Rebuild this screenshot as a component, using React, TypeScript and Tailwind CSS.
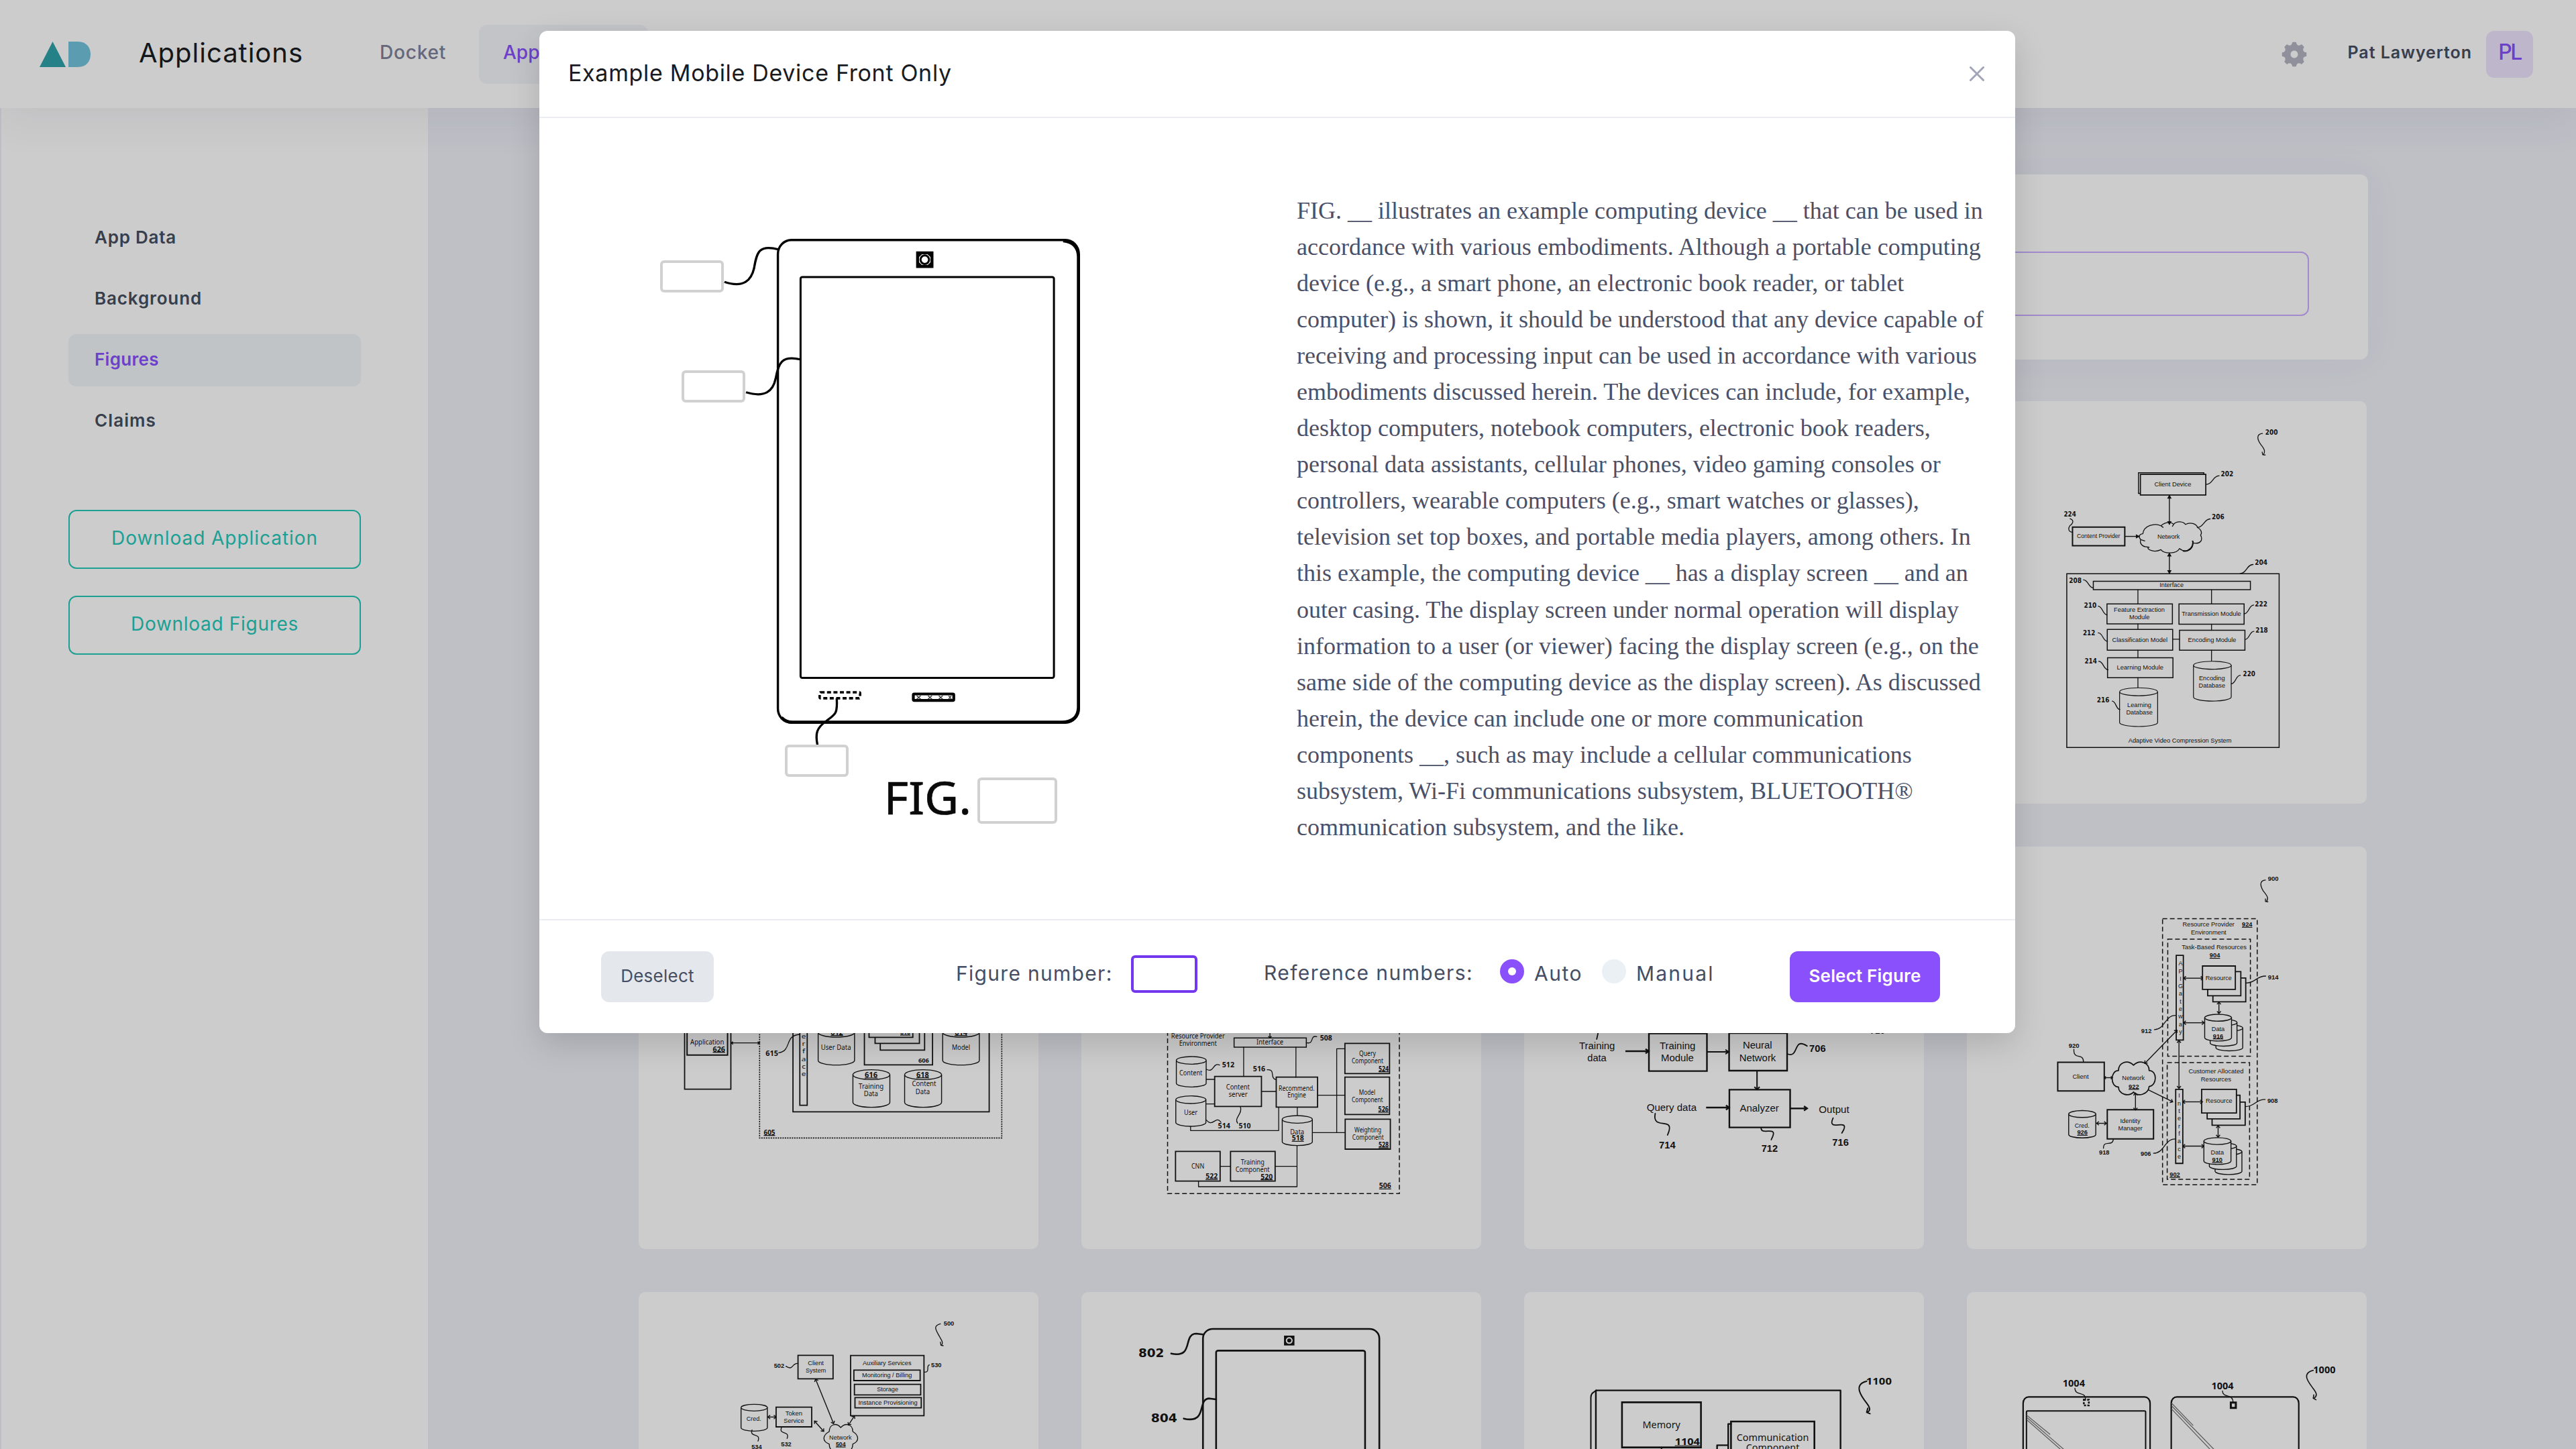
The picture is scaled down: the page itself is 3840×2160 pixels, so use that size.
import React from "react";
import { RiSettings5Fill } from "react-icons/ri";

/* ---------- drawing primitives shared by the figures ---------- */

const INK = "#161616";
type Font = "sans" | "verdana" | "dejavu";
const FONTS: Record<Font, string> = {
  sans: '"Liberation Sans", sans-serif',
  verdana: '"Noto Sans", sans-serif',
  dejavu: '"DejaVu Sans", sans-serif',
};

function T({ x, y, w, t, size = 25, b = false, u = false, f = "sans" }: { x: number; y: number; w: number; t: string; size?: number; b?: boolean; u?: boolean; f?: Font }) {
  return (
    <g>
      <text x={x} y={y} textLength={w} lengthAdjust="spacingAndGlyphs" fontSize={size} fontWeight={b ? 700 : 400} fontFamily={FONTS[f]} fill={INK}>
        {t}
      </text>
      {u && <path d={`M${x} ${y + 3}H${x + w}`} stroke={INK} strokeWidth={1.2} vectorEffect="non-scaling-stroke" />}
    </g>
  );
}

/** Rectangle given by its two corners. */
function R({ a, s = 1.5, dash, fill = "none", rx, ry }: { a: [number, number, number, number]; s?: number; dash?: string; fill?: string; rx?: number; ry?: number }) {
  return <rect x={a[0]} y={a[1]} width={a[2] - a[0]} height={a[3] - a[1]} rx={rx} ry={ry} fill={fill} stroke={INK} strokeWidth={s} strokeDasharray={dash} vectorEffect="non-scaling-stroke" />;
}

function P({ d, s = 1.3, c = INK }: { d: string; s?: number; c?: string }) {
  return <path d={d} fill="none" stroke={c} strokeWidth={s} strokeLinecap="round" strokeLinejoin="round" vectorEffect="non-scaling-stroke" />;
}

/** S-shaped leader line between a reference number and its part. */
function Lead({ a }: { a: [number, number, number, number] }) {
  const m = (a[0] + a[2]) / 2;
  return <P d={`M${a[0]} ${a[1]}C${m} ${a[1]} ${m} ${a[3]} ${a[2]} ${a[3]}`} />;
}

function Cyl({ a, ry = 14, s = 1.4 }: { a: [number, number, number, number]; ry?: number; s?: number }) {
  const [x1, y1, x2, y2] = a;
  const rx = (x2 - x1) / 2;
  return (
    <g fill="#ffffff" stroke={INK} strokeWidth={s}>
      <path vectorEffect="non-scaling-stroke" d={`M${x1} ${y1 + ry}V${y2 - ry}A${rx} ${ry} 0 0 0 ${x2} ${y2 - ry}V${y1 + ry}`} />
      <ellipse vectorEffect="non-scaling-stroke" cx={x1 + rx} cy={y1 + ry} rx={rx} ry={ry} />
    </g>
  );
}

/** Straight arrow; kx and ky are the horizontal and vertical scale of the figure. */
function Arrow({ a, two = false, h = 11, s = 1.4, solid = false, kx = 1, ky = 1 }: { a: [number, number, number, number]; two?: boolean; h?: number; s?: number; solid?: boolean; kx?: number; ky?: number }) {
  const [x1, y1, x2, y2] = a;
  const ang = Math.atan2((y2 - y1) * ky, (x2 - x1) * kx);
  const head = (x: number, y: number, t: number) => {
    const p = (o: number) => `${x - (h * Math.cos(t + o)) / kx} ${y - (h * Math.sin(t + o)) / ky}`;
    const o = solid ? 0.5 : 0.7;
    return `M${p(o)}L${x} ${y}L${p(-o)}${solid ? "Z" : ""}`;
  };
  return (
    <g fill={solid ? INK : "none"} stroke={INK} strokeWidth={s}>
      <path vectorEffect="non-scaling-stroke" d={`M${x1} ${y1}L${x2} ${y2}`} />
      <path vectorEffect="non-scaling-stroke" d={head(x2, y2, ang)} />
      {two && <path vectorEffect="non-scaling-stroke" d={head(x1, y1, ang + Math.PI)} />}
    </g>
  );
}

function Vertical({ x, ys, t, size = 22, f = "sans" }: { x: number; ys: number[]; t: string; size?: number; f?: Font }) {
  return (
    <g>
      {ys.map((y, i) => (
        <text key={y} x={x} y={y} textAnchor="middle" fontSize={size} fontFamily={FONTS[f]} fill={INK}>
          {t[i]}
        </text>
      ))}
    </g>
  );
}

function Figure({ box, children }: { box: string; children: React.ReactNode }) {
  return (
    <svg viewBox={box} preserveAspectRatio="none" className="block h-full w-full">
      {children}
    </svg>
  );
}

/* ---------- figures ---------- */

function VideoCompression() {
  return (
    <Figure box="29 20 1461 1518">
      <T f="dejavu" b x={1119} y={147} w={46} t="200" />
      <P d="M1109 142C1085 145 1090 165 1104 185C1118 203 1120 212 1112 222M1108 212L1110 222L1119 223" />
      <R a={[656, 290, 895, 368]} s={1.4} />
      <R a={[663, 296, 902, 374]} s={1.7} fill="#ffffff" />
      <T x={714} y={342} w={135} t="Client Device" />
      <Lead a={[904, 334, 951, 301]} />
      <T f="dejavu" b x={957} y={304} w={46} t="202" />
      <Arrow solid two a={[769, 376, 769, 484]} />
      <T f="dejavu" b x={383} y={455} w={45} t="224" />
      <P d="M406 463C425 470 413 485 405 490C398 500 400 513 414 514" />
      <R a={[415, 495, 606, 565]} s={2} />
      <T x={431} y={537} w={158} t="Content Provider" />
      <Arrow solid a={[607, 530, 658, 530]} />
      <P d="M672 520C675 490 715 478 738 490C755 474 775 475 785 484C797 470 820 474 828 485C845 475 868 482 872 497C888 505 888 520 883 525C893 545 882 560 855 555C856 580 830 596 806 576C795 597 750 597 738 580C715 592 690 582 690 570C668 570 660 555 664 542C655 532 658 522 672 520M738 490L746 496M785 484L780 492M855 555L853 547M690 570L695 571M664 542L679 547" />
      <P s={2} d="M855 549C856 572 840 588 820 585" />
      <T x={725} y={538} w={82} t="Network" />
      <Lead a={[872, 496, 918, 464]} />
      <T f="dejavu" b x={924} y={466} w={46} t="206" />
      <Arrow solid two a={[769, 594, 769, 669]} />
      <Lead a={[1028, 670, 1075, 636]} />
      <T f="dejavu" b x={1081} y={638} w={46} t="204" />
      <R a={[394, 671, 1170, 1326]} />
      <T f="dejavu" b x={402} y={705} w={46} t="208" />
      <Lead a={[455, 694, 491, 724]} />
      <R a={[491, 699, 1065, 731]} />
      <T x={733} y={722} w={88} t="Interface" />
      <P d="M654 731V784M923 731V784M654 860V881M923 861V884M781 918H806M654 959V988M923 959V1001M654 1063V1101" />
      <R a={[541, 785, 780, 860]} />
      <T x={566} y={815} w={186} t="Feature Extraction" />
      <T x={622} y={843} w={75} t="Module" />
      <T f="dejavu" b x={457} y={799} w={46} t="210" />
      <Lead a={[509, 793, 541, 826]} />
      <R a={[804, 785, 1042, 861]} />
      <T x={814} y={830} w={217} t="Transmission Module" />
      <Lead a={[1042, 822, 1077, 789]} />
      <T f="dejavu" b x={1081} y={794} w={46} t="222" />
      <R a={[542, 881, 781, 959]} />
      <T x={560} y={928} w={202} t="Classification Model" />
      <T f="dejavu" b x={453} y={902} w={45} t="212" />
      <Lead a={[509, 894, 543, 926]} />
      <R a={[806, 884, 1045, 959]} />
      <T x={837} y={929} w={176} t="Encoding Module" />
      <Lead a={[1045, 919, 1078, 888]} />
      <T f="dejavu" b x={1084} y={893} w={45} t="218" />
      <R a={[543, 988, 782, 1063]} />
      <T x={577} y={1033} w={170} t="Learning Module" />
      <T f="dejavu" b x={459} y={1009} w={45} t="214" />
      <Lead a={[511, 1001, 545, 1033]} />
      <Cyl a={[857, 1001, 995, 1151]} ry={15} s={1.2} />
      <T x={877} y={1073} w={95} t="Encoding" />
      <T x={876} y={1101} w={97} t="Database" />
      <Lead a={[995, 1086, 1028, 1054]} />
      <T f="dejavu" b x={1038} y={1057} w={45} t="220" />
      <Cyl a={[587, 1101, 726, 1247]} ry={15} s={1.2} />
      <T x={615} y={1173} w={88} t="Learning" />
      <T x={611} y={1201} w={97} t="Database" />
      <Lead a={[560, 1151, 588, 1183]} />
      <T f="dejavu" b x={504} y={1156} w={46} t="216" />
      <T x={619} y={1307} w={377} t="Adaptive Video Compression System" />
    </Figure>
  );
}

function Stack({ boxes }: { boxes: [number, number, number, number][] }) {
  return (
    <g>
      {boxes.map((a) => (
        <R key={a[0]} a={a} s={1.8} fill="#ffffff" />
      ))}
    </g>
  );
}

function ResourceEnvironment() {
  return (
    <Figure box="29 5 1461 1517">
      <T b x={1129} y={135} w={39} t="900" />
      <P d="M1120 131C1098 133 1100 152 1112 172C1128 192 1132 200 1124 211M1120 202L1120 212L1129 213" />
      <R a={[744, 277, 1090, 1279]} dash="7 4" />
      <T x={817} y={307} w={190} t="Resource Provider" />
      <T b u x={1034} y={306} w={38} t="924" />
      <T x={848} y={336} w={129} t="Environment" />
      <R a={[763, 354, 1065, 795]} dash="7 4" />
      <T x={814} y={393} w={237} t="Task-Based Resources" />
      <T b u x={916} y={423} w={38} t="904" />
      <R a={[794, 415, 820, 734]} s={1.8} />
      <Vertical x={810} t="APIGateway" ys={[453, 482, 510, 538, 567, 596, 624, 653, 682, 710]} />
      <Arrow two a={[821, 501, 892, 501]} />
      <Stack boxes={[[928, 500, 1048, 590], [909, 476, 1030, 567], [890, 455, 1010, 543]]} />
      <T x={901} y={507} w={96} t="Resource" />
      <Lead a={[1049, 519, 1121, 493]} />
      <T b x={1129} y={506} w={39} t="914" />
      <Arrow two a={[950, 591, 950, 634]} />
      <Cyl a={[939, 677, 1037, 775]} ry={12} />
      <Cyl a={[918, 656, 1016, 757]} ry={12} />
      <Cyl a={[898, 637, 996, 738]} ry={13} />
      <T x={923} y={701} w={48} t="Data" />
      <T b u x={928} y={727} w={38} t="916" />
      <Arrow two a={[821, 669, 896, 669]} />
      <T b x={666} y={707} w={38} t="912" />
      <Lead a={[714, 695, 791, 641]} />
      <Arrow two a={[797, 697, 679, 822]} />
      <R a={[761, 819, 1062, 1259]} dash="7 4" />
      <Arrow two a={[804, 736, 804, 916]} />
      <T x={839} y={860} w={201} t="Customer Allocated" />
      <T x={884} y={889} w={111} t="Resources" />
      <R a={[792, 920, 818, 1199]} s={1.8} />
      <Vertical x={805} t="Interface" ys={[951, 980, 1009, 1037, 1066, 1094, 1122, 1152, 1180]} />
      <Stack boxes={[[925, 968, 1046, 1055], [907, 942, 1027, 1031], [887, 920, 1014, 1009]]} />
      <T x={902} y={972} w={97} t="Resource" />
      <Arrow two a={[818, 967, 890, 967]} />
      <Lead a={[1046, 985, 1119, 958]} />
      <T b x={1127} y={971} w={38} t="908" />
      <Arrow two a={[947, 1057, 947, 1100]} />
      <Cyl a={[936, 1143, 1034, 1241]} ry={12} />
      <Cyl a={[915, 1122, 1014, 1222]} ry={12} />
      <Cyl a={[895, 1102, 994, 1203]} ry={13} />
      <T x={920} y={1166} w={48} t="Data" />
      <T b u x={925} y={1193} w={38} t="910" />
      <Arrow two a={[818, 1134, 895, 1134]} />
      <T b x={664} y={1171} w={38} t="906" />
      <Lead a={[711, 1161, 790, 1107]} />
      <T b u x={770} y={1249} w={38} t="902" />
      <T b x={401} y={763} w={39} t="920" />
      <P d="M420 769C418 812 455 780 455 816" />
      <R a={[361, 818, 531, 926]} s={2} />
      <T x={415} y={880} w={59} t="Client" />
      <Arrow two a={[531, 876, 561, 876]} h={8} />
      <P s={1.7} d="M583 849C583 820 615 805 638 829C661 805 695 820 695 849C725 849 725 905 695 909C693 938 655 950 638 930C620 950 583 938 583 911C552 911 552 849 583 849" />
      <T x={596} y={886} w={83} t="Network" />
      <T b u x={620} y={917} w={38} t="922" />
      <Arrow a={[692, 922, 781, 967]} />
      <Arrow two a={[645, 934, 645, 998]} />
      <R a={[542, 997, 711, 1107]} s={2} />
      <T x={589} y={1046} w={74} t="Identity" />
      <T x={582} y={1074} w={89} t="Manager" />
      <P d="M564 1108C562 1138 528 1108 528 1142" />
      <T b x={512} y={1166} w={38} t="918" />
      <Cyl a={[401, 1000, 500, 1103]} ry={13} />
      <T x={423} y={1064} w={54} t="Cred." />
      <T b u x={432} y={1090} w={38} t="926" />
      <Arrow two a={[503, 1048, 539, 1048]} />
    </Figure>
  );
}

function TrainingData() {
  return (
    <Figure box="29 -774 1461 1800">
      <R a={[197, -420, 366, 311]} s={1.8} />
      <R a={[206, -60, 354, 158]} s={2} />
      <T f="verdana" size={31} x={218} y={112} w={123} t="Application" />
      <T f="verdana" size={31} b u x={300} y={143} w={45} t="626" />
      <Arrow two h={9} a={[367, 104, 471, 104]} />
      <R a={[471, -500, 1356, 529]} dash="2 1.5" s={1.6} />
      <T f="verdana" size={30} b u x={486} y={515} w={42} t="605" />
      <R a={[593, -440, 1310, 412]} s={1.8} />
      <R a={[618, -400, 645, 383]} s={1.8} />
      <Vertical f="verdana" size={29} x={632} t="erface" ys={[84, 117, 151, 185, 219, 253]} />
      <T f="verdana" size={31} b x={493} y={163} w={46} t="615" />
      <P d="M541 148C590 140 560 70 618 66" />
      <Cyl a={[685, 36, 818, 203]} ry={21} />
      <T f="verdana" size={30} b u x={731} y={68} w={45} t="612" />
      <T f="verdana" size={31} x={695} y={136} w={110} t="User Data" />
      <R a={[854, -160, 1103, 202]} s={1.8} />
      <R a={[912, -20, 1074, 136]} s={1.8} fill="#ffffff" />
      <R a={[893, -50, 1055, 106]} s={1.8} fill="#ffffff" />
      <R a={[871, -80, 1031, 79]} s={1.8} fill="#ffffff" />
      <T f="verdana" size={25} b u x={985} y={66} w={37} t="610" />
      <T f="verdana" size={27} b x={1051} y={191} w={39} t="606" />
      <Cyl a={[1140, 36, 1274, 203]} ry={21} />
      <T f="verdana" size={30} b u x={1184} y={68} w={46} t="614" />
      <T f="verdana" size={31} x={1174} y={136} w={66} t="Model" />
      <Cyl a={[812, 224, 947, 392]} ry={22} />
      <T f="verdana" size={30} b u x={855} y={258} w={47} t="616" />
      <T f="verdana" size={31} x={833} y={310} w={91} t="Training" />
      <T f="verdana" size={31} x={852} y={343} w={52} t="Data" />
      <Cyl a={[1001, 224, 1136, 392]} ry={22} />
      <T f="verdana" size={30} b u x={1044} y={257} w={46} t="618" />
      <T f="verdana" size={31} x={1028} y={298} w={88} t="Content" />
      <T f="verdana" size={31} x={1041} y={333} w={52} t="Data" />
    </Figure>
  );
}

function Recommendation() {
  const v = { f: "verdana" as Font, size: 30 };
  return (
    <Figure box="29 -774 1461 1800">
      <R a={[344, -40, 1191, 778]} dash="7 4" />
      <T {...v} x={357} y={83} w={196} t="Resource Provider" />
      <T {...v} x={386} y={116} w={138} t="Environment" />
      <Arrow h={9} a={[718, -30, 718, 81]} />
      <R a={[587, 82, 851, 123]} />
      <T {...v} x={669} y={110} w={98} t="Interface" />
      <P d="M851 103C882 112 862 68 889 76" />
      <T {...v} b x={901} y={93} w={44} t="508" />
      <P d="M622 123V254M813 123V258M485 267H516M687 321H741M484 377H516M428 476V496H750V391M818 391V430M873 505H992M892 338H992M962 505V130H992M536 656H574M737 656H817M817 563V747H457V722" />
      <Cyl a={[376, 165, 485, 301]} ry={17} />
      <T {...v} x={387} y={250} w={84} t="Content" />
      <P d="M486 222C515 240 508 190 534 203" />
      <T {...v} b x={543} y={214} w={45} t="512" />
      <R a={[516, 254, 687, 388]} s={1.8} />
      <T {...v} x={558} y={311} w={86} t="Content" />
      <T {...v} x={567} y={344} w={69} t="server" />
      <T {...v} b x={656} y={231} w={45} t="516" />
      <P d="M708 224C740 220 716 262 740 268" />
      <R a={[741, 257, 892, 391]} s={1.8} />
      <T {...v} x={750} y={318} w={131} t="Recommend." />
      <T {...v} x={782} y={348} w={68} t="Engine" />
      <Cyl a={[374, 341, 484, 477]} ry={17} />
      <T {...v} x={404} y={425} w={49} t="User" />
      <P d="M486 449C510 485 520 425 539 459" />
      <T {...v} b x={528} y={486} w={45} t="514" />
      <P d="M610 390C620 420 585 440 600 463" />
      <T {...v} b x={604} y={486} w={44} t="510" />
      <Cyl a={[763, 429, 873, 563]} ry={17} />
      <T {...v} x={792} y={512} w={51} t="Data" />
      <T {...v} b u x={798} y={541} w={44} t="518" />
      <R a={[992, 106, 1155, 241]} s={1.8} />
      <T {...v} x={1044} y={161} w={61} t="Query" />
      <T {...v} x={1017} y={194} w={115} t="Component" />
      <T {...v} b u x={1115} y={230} w={37} t="524" />
      <R a={[992, 257, 1155, 424]} s={1.8} />
      <T {...v} x={1043} y={335} w={60} t="Model" />
      <T {...v} x={1017} y={368} w={114} t="Component" />
      <T {...v} b u x={1114} y={411} w={37} t="526" />
      <R a={[993, 445, 1158, 579]} s={1.8} />
      <T {...v} x={1027} y={504} w={98} t="Weighting" />
      <T {...v} x={1019} y={537} w={115} t="Component" />
      <T {...v} b u x={1115} y={570} w={37} t="528" />
      <R a={[373, 589, 536, 722]} s={1.8} />
      <T {...v} x={431} y={665} w={47} t="CNN" />
      <T {...v} b u x={483} y={712} w={44} t="522" />
      <R a={[574, 589, 737, 722]} s={1.8} />
      <T {...v} x={612} y={649} w={86} t="Training" />
      <T {...v} x={592} y={681} w={125} t="Component" />
      <T {...v} b u x={684} y={713} w={44} t="520" />
      <T {...v} b u x={1117} y={754} w={44} t="506" />
    </Figure>
  );
}

function NeuralNetwork() {
  const v = { size: 44 };
  return (
    <Figure box="29 -774 1461 1800">
      <P s={1.8} d="M300 40C300 65 297 75 294 87" />
      <T {...v} x={230} y={132} w={131} t="Training" />
      <T {...v} x={260} y={186} w={70} t="data" />
      <Arrow h={15} s={2.4} a={[399, 141, 484, 141]} />
      <R a={[485, 62, 697, 230]} s={2.4} />
      <T {...v} x={524} y={132} w={131} t="Training" />
      <T {...v} x={529} y={186} w={120} t="Module" />
      <Arrow h={15} s={2} a={[697, 144, 776, 144]} />
      <R a={[778, 60, 990, 228]} s={2.4} />
      <T {...v} x={828} y={130} w={107} t="Neural" />
      <T {...v} x={815} y={185} w={134} t="Network" />
      <P s={1.8} d="M990 153C1035 175 1010 75 1063 118" />
      <T {...v} b x={1071} y={144} w={60} t="706" />
      <T {...v} b x={1293} y={64} w={55} t="710" />
      <Arrow h={15} s={2} a={[880, 230, 880, 312]} />
      <R a={[779, 313, 1001, 482]} s={2.4} />
      <T {...v} x={817} y={411} w={143} t="Analyzer" />
      <T {...v} x={477} y={408} w={182} t="Query data" />
      <Arrow h={15} s={2.4} a={[694, 393, 778, 393]} />
      <P s={1.8} d="M508 420C495 495 575 435 558 500L553 516" />
      <T {...v} b x={522} y={577} w={60} t="714" />
      <Arrow h={15} s={2.4} a={[1002, 397, 1063, 397]} />
      <P s={1.8} d="M895 483C893 520 952 475 938 520L932 537" />
      <T {...v} b x={896} y={592} w={60} t="712" />
      <T {...v} x={1106} y={416} w={111} t="Output" />
      <P s={1.8} d="M1158 440C1133 505 1215 440 1197 492L1190 507" />
      <T {...v} b x={1155} y={564} w={60} t="716" />
    </Figure>
  );
}

function AuxiliaryServices() {
  const k = { kx: 0.816, ky: 0.333, h: 4.5 };
  return (
    <Figure box="15 48 730 1800">
      <T b size={29} x={572} y={197} w={19} t="500" />
      <P d="M566 190C550 200 560 225 565 250C570 270 571 278 568 286M566 272L567 286L571 288" />
      <R a={[306, 331, 370, 436]} s={1.8} />
      <T size={29} x={324} y={375} w={29} t="Client" />
      <T size={29} x={320} y={409} w={37} t="System" />
      <T b size={29} x={262} y={387} w={19} t="502" />
      <P d="M284 380C298 402 294 365 306 367" />
      <R a={[402, 332, 536, 601]} s={1.8} />
      <T size={29} x={424} y={376} w={89} t="Auxiliary Services" />
      <R a={[408, 397, 529, 444]} s={1.8} />
      <T size={29} x={423} y={429} w={91} t="Monitoring / Billing" />
      <R a={[409, 461, 530, 508]} s={1.8} />
      <T size={29} x={450} y={493} w={39} t="Storage" />
      <R a={[410, 520, 531, 566]} s={1.8} />
      <T size={29} x={416} y={552} w={108} t="Instance Provisioning" />
      <T b size={29} x={549} y={384} w={19} t="530" />
      <P d="M537 406C548 408 539 376 546 374" />
      <Arrow two {...k} a={[338, 437, 371, 637]} />
      <Arrow two {...k} a={[409, 602, 398, 643]} />
      <Cyl a={[202, 550, 250, 670]} ry={15} />
      <T size={29} x={212} y={624} w={27} t="Cred." />
      <Arrow two {...k} a={[251, 607, 266, 607]} />
      <R a={[266, 563, 331, 651]} s={1.8} />
      <T size={29} x={283} y={600} w={31} t="Token" />
      <T size={29} x={280} y={633} w={37} t="Service" />
      <P d="M276 653C270 690 292 665 286 703" />
      <T b size={29} x={275} y={738} w={19} t="532" />
      <P d="M222 665C217 700 239 675 233 715" />
      <T b size={28} x={221} y={749} w={19} t="534" />
      <Arrow two {...k} a={[336, 625, 353, 671]} />
      <P d="M363 672C363 640 376 630 384 654C393 630 406 640 406 672C418 690 418 715 406 728C406 760 393 775 384 752C376 775 363 760 363 728C350 715 350 690 363 672" />
      <T size={29} x={363} y={708} w={41} t="Network" />
      <T b u size={29} x={375} y={738} w={18} t="504" />
    </Figure>
  );
}

function DeviceThumb() {
  return (
    <Figure box="823 48 730 1800">
      <R a={[1045, 213, 1367, 1600]} rx={18} ry={42} s={2.6} />
      <R a={[1069, 310, 1341, 1450]} rx={4} ry={8} s={2.6} />
      <rect x={1193} y={243} width={19} height={44} fill={INK} />
      <ellipse cx={1202.5} cy={265} rx={5} ry={12} fill="none" stroke="#ffffff" strokeWidth={2} vectorEffect="non-scaling-stroke" />
      <T f="dejavu" b size={54} x={927} y={339} w={47} t="802" />
      <P s={2.6} d="M987 323C1030 347 1007 234 1033 234L1045 238" />
      <T f="dejavu" b size={54} x={950} y={629} w={48} t="804" />
      <P s={2.6} d="M1010 614C1055 640 1033 524 1057 524L1069 528" />
    </Figure>
  );
}

function Components() {
  return (
    <Figure box="14 48 719 1800">
      <P s={2.4} d="M583 760V488H143V760" />
      <P s={2} d="M144 488C138 498 134 500 134 520V760" />
      <R a={[190, 541, 332, 743]} s={2.6} />
      <T f="verdana" size={44} x={227} y={657} w={68} t="Memory" />
      <T f="verdana" b u size={41} x={285} y={732} w={45} t="1104" />
      <P s={2} d="M261 743V760" />
      <R a={[386, 627, 536, 900]} s={2.6} />
      <P s={2.4} d="M386 638H381V760M381 733H361V760" />
      <T f="verdana" size={44} x={396} y={714} w={130} t="Communication" />
      <T f="verdana" size={44} x={413} y={760} w={96} t="Component" />
      <T f="verdana" b size={43} x={629} y={463} w={46} t="1100" />
      <P s={2} d="M630 447C604 462 622 520 630 545C637 568 637 578 631 586M632 568L630 586L636 592" />
    </Figure>
  );
}

function TwoDevices() {
  return (
    <Figure box="811 48 718 1800">
      <R a={[912, 517, 1140, 1400]} rx={10} ry={28} s={2.2} />
      <R a={[918, 580, 1132, 1300]} rx={2} ry={5} s={2} />
      <R a={[1021, 530, 1030, 555]} dash="3 2" s={2.6} />
      <T f="verdana" b size={41} x={983} y={471} w={40} t="1004" />
      <P d="M1005 478C1005 515 1024 488 1024 529" />
      <P c="#777777" d="M919 600L960 684M919 610L989 760M919 620L983 760" />
      <R a={[1178, 517, 1407, 1400]} rx={10} ry={28} s={2.2} />
      <R a={[1285, 542, 1294, 566]} s={3} />
      <T f="verdana" b size={41} x={1250} y={483} w={40} t="1004" />
      <P d="M1270 490C1270 525 1289 500 1289 541" />
      <P c="#777777" d="M1179 546L1217 644M1179 558L1258 760M1179 572L1251 760" />
      <T f="verdana" b size={41} x={1433} y={411} w={40} t="1000" />
      <P s={1.6} d="M1433 398C1410 412 1426 455 1433 480C1440 502 1440 512 1435 522M1434 508L1433 523L1438 530" />
    </Figure>
  );
}

function MobileDevice() {
  return (
    <Figure box="6 -163 1562 1872">
      <rect x={537} y={122} width={670} height={1128} rx={30} ry={33} fill="none" stroke="#000000" strokeWidth={3.4} vectorEffect="non-scaling-stroke" />
      <path d="M1172 124C1195 126 1205 140 1206 160V1215C1205 1240 1190 1249 1168 1249H570C560 1249 552 1246 545 1238" fill="none" stroke="#000000" strokeWidth={4.6} vectorEffect="non-scaling-stroke" />
      <rect x={587.5} y={208.5} width={564} height={937} rx={4} ry={4} fill="none" stroke="#000000" strokeWidth={3} vectorEffect="non-scaling-stroke" />
      <rect x={848} y={152} width={32} height={32} fill="#ffffff" stroke="#000000" strokeWidth={4.4} vectorEffect="non-scaling-stroke" />
      <path d="M848 152h13l-13 13zM880 152h-13l13 13zM848 184h13l-13-13zM880 184h-13l13-13z" fill="#000000" />
      <ellipse cx={864} cy={168} rx={9.5} ry={10} fill="#ffffff" stroke="#000000" strokeWidth={3} vectorEffect="non-scaling-stroke" />
      <rect x={630} y={1179} width={90} height={14} rx={2} fill="none" stroke="#000000" strokeWidth={3.6} strokeDasharray="6 3.6" vectorEffect="non-scaling-stroke" />
      <rect x={838.5} y={1183} width={90} height={15} rx={2} fill="none" stroke="#000000" strokeWidth={4.2} vectorEffect="non-scaling-stroke" />
      <path d="M846 1187l9 8M855 1187l-9 8M871 1187l9 8M880 1187l-9 8M895 1187l9 8M904 1187l-9 8M917 1187l6 8M923 1187l-6 8" fill="none" stroke="#333333" strokeWidth={2} />
      <g fill="none" stroke="#000000" strokeWidth={5}>
        <path d="M418 220C462 235 478 215 484 188C490 150 495 132 538 144" />
        <path d="M466 478C508 491 526 476 532 446C538 410 545 391 587 401" />
        <path d="M668 1193C670 1230 665 1230 645 1246C623 1262 620 1275 625 1302" />
      </g>
      <text x={773} y={1464} fontSize={105} textLength={195} lengthAdjust="spacingAndGlyphs" fontFamily={'"Noto Sans", sans-serif'} fill="#0a0a0a" stroke="#0a0a0a" strokeWidth={1}>
        FIG.
      </text>
    </Figure>
  );
}

/* ---------- page ---------- */

const cards: { id: string; art?: React.ReactNode }[] = [
  { id: "a1" }, { id: "a2" }, { id: "a3" }, { id: "a4", art: <VideoCompression /> },
  { id: "b1", art: <TrainingData /> }, { id: "b2", art: <Recommendation /> }, { id: "b3", art: <NeuralNetwork /> }, { id: "b4", art: <ResourceEnvironment /> },
  { id: "c1", art: <AuxiliaryServices /> }, { id: "c2", art: <DeviceThumb /> }, { id: "c3", art: <Components /> }, { id: "c4", art: <TwoDevices /> },
];

function Header() {
  return (
    <header className="relative z-10 flex h-[161px] items-center bg-white pr-[64px] pl-[59px] shadow-[0_20px_60px_0_rgba(82,63,105,0.08)]">
      <svg viewBox="0 0 76 38" className="mr-[72px] h-[38px] w-[76px]">
        <path d="M0 38L19.5 0L39 38Z" fill="#2fa2aa" />
        <path d="M43 0H57C70 0 76 9 76 19S70 38 57 38H43Z" fill="#73c4dc" />
      </svg>
      <div className="w-[323px] pb-1 text-[40px] leading-none tracking-[0.99px] text-[#181c22]">Applications</div>
      <nav className="flex">
        <div className="flex h-[88px] w-[184px] items-center px-9 pb-1.5 text-[28px] font-medium tracking-[0.8px] text-[#7e8299]">Docket</div>
        <div className="flex h-[88px] w-[252px] items-center rounded-xl bg-[#f3f6f9] px-9 pb-1.5 text-[28px] font-medium text-[#8950fc]">Applications</div>
      </nav>
      <div className="ml-auto flex items-center">
        <RiSettings5Fill className="size-[44px] text-[#b5b5c3]" />
        <div className="mr-[21px] ml-[58px] pb-1 text-[25px] leading-none font-semibold tracking-[0.93px] text-[#464e5f]">Pat Lawyerton</div>
        <div className="flex size-[70px] items-center justify-center rounded-xl bg-[#eee5ff] pb-1.5 text-[32px] leading-none font-medium tracking-[-2.5px] text-[#8950fc]">PL</div>
      </div>
    </header>
  );
}

function Sidebar() {
  const item = "flex h-[78px] items-center rounded-xl pr-10 pl-[39px] pb-1 text-[26px] font-semibold ";
  return (
    <aside className="flex w-[636px] flex-col bg-white px-[100px] pt-[155px]">
      <nav className="flex flex-col gap-[13px]">
        <div className={item + "tracking-[0.77px] text-[#464e5f]"}>App Data</div>
        <div className={item + "tracking-[0.87px] text-[#464e5f]"}>Background</div>
        <div className={item + "bg-[#f0f5f9] tracking-[0.3px] text-[#8950fc]"}>Figures</div>
        <div className={item + "tracking-[1.1px] text-[#464e5f]"}>Claims</div>
      </nav>
      <div className="mt-[93px] flex flex-col gap-10 text-[28px] text-[#25c8ba]">
        <div className="flex h-[88px] items-center justify-center rounded-xl border-[2.5px] border-[#25c8ba] pb-1 tracking-[0.95px]">Download Application</div>
        <div className="flex h-[88px] items-center justify-center rounded-xl border-[2.5px] border-[#25c8ba] pb-1 tracking-[0.7px]">Download Figures</div>
      </div>
    </aside>
  );
}

function Slot({ className }: { className: string }) {
  return <div className={"absolute rounded-md border-4 border-[#d1d1d1] bg-white " + className} />;
}

function FigureModal() {
  return (
    <section className="absolute top-[46px] left-[804px] flex h-[1494px] w-[2200px] flex-col rounded-xl bg-white text-[#464e63] shadow-[0_16px_48px_rgba(0,0,0,0.15)]">
      <div className="flex h-[130px] items-center justify-between border-b-2 border-[#ebedf3] pr-[46px] pl-[43px]">
        <h1 className="pb-1 text-[34px] tracking-[0.68px] text-[#181c22]">Example Mobile Device Front Only</h1>
        <svg viewBox="0 0 22 22" className="size-[22px]" fill="none" stroke="#a1a5b7" strokeWidth={3} strokeLinecap="round">
          <path d="M1.5 1.5L20.5 20.5M20.5 1.5L1.5 20.5" />
        </svg>
      </div>
      <div className="flex h-[1194px]">
        <div className="relative h-full w-[1046px]">
          <MobileDevice />
          <Slot className="top-[212px] left-[180px] h-[48px] w-[95px]" />
          <Slot className="top-[376px] left-[212px] h-[48px] w-[95px]" />
          <Slot className="top-[934px] left-[366px] h-[48px] w-[95px]" />
          <Slot className="top-[983px] left-[653px] h-[69px] w-[119px]" />
        </div>
        <p className="pt-[111px] pl-[83px] font-['Liberation_Serif',serif] text-[36px] leading-[54.04px] whitespace-nowrap text-[#4a5068]">
          FIG. __ illustrates an example computing device __ that can be used in<br />
          accordance with various embodiments. Although a portable computing<br />
          device (e.g., a smart phone, an electronic book reader, or tablet<br />
          computer) is shown, it should be understood that any device capable of<br />
          receiving and processing input can be used in accordance with various<br />
          embodiments discussed herein. The devices can include, for example,<br />
          desktop computers, notebook computers, electronic book readers,<br />
          personal data assistants, cellular phones, video gaming consoles or<br />
          controllers, wearable computers (e.g., smart watches or glasses),<br />
          television set top boxes, and portable media players, among others. In<br />
          this example, the computing device __ has a display screen __ and an<br />
          outer casing. The display screen under normal operation will display<br />
          information to a user (or viewer) facing the display screen (e.g., on the<br />
          same side of the computing device as the display screen). As discussed<br />
          herein, the device can include one or more communication<br />
          components __, such as may include a cellular communications<br />
          subsystem, Wi-Fi communications subsystem, BLUETOOTH®<br />
          communication subsystem, and the like.
        </p>
      </div>
      <div className="flex h-[170px] items-center border-t-2 border-[#ebedf3] pl-[92px] text-[30px] leading-none">
        <button className="mr-[361px] h-[76px] w-[168px] rounded-xl bg-[#e4e8ed] pb-0.5 text-[26px] tracking-[0.25px]">Deselect</button>
        <div className="flex items-center pb-2">
          <span className="w-[261px] pb-0.5 tracking-[1.3px]">Figure number:</span>
          <div className="h-[56px] w-[99px] rounded-md border-4 border-[#7337ee]" />
        </div>
        <div className="ml-[99px] flex items-center pb-4">
          <span className="w-[352px] pt-1 tracking-[1.42px]">Reference numbers:</span>
          <span className="flex size-9 items-center justify-center rounded-full bg-[#8950fc]">
            <span className="size-3 rounded-full bg-white" />
          </span>
          <span className="w-[116px] pt-[5px] pl-[15px] tracking-[1.51px]">Auto</span>
          <span className="size-9 rounded-full bg-[#ebf0f4]" />
          <span className="w-[244px] pt-[5px] pl-[15px] tracking-[2.2px]">Manual</span>
        </div>
        <button className="h-[76px] w-[224px] rounded-xl bg-[#8950fc] pb-0.5 text-[26px] font-semibold tracking-[0.17px] text-white">Select Figure</button>
      </div>
    </section>
  );
}

export default function App() {
  return (
    <div className="relative flex h-[2160px] w-[3840px] flex-col overflow-hidden bg-[#eef0f8] font-['Inter',sans-serif]">
      <Header />
      <div className="flex min-h-0 flex-1 pl-[2px]">
        <Sidebar />
        <main className="flex w-[2892px] flex-col pt-[99px] pl-[314px]">
          <div className="flex h-[276px] shrink-0 items-center rounded-xl bg-white px-[88px] pt-[50px] shadow-[0_0_60px_0_rgba(82,63,105,0.05)]">
            <div className="h-[96px] w-full rounded-xl border-2 border-[#cbadff]" />
          </div>
          <div className="mt-[62px] grid w-[2576px] grid-cols-4 gap-16">
            {cards.map((c) => (
              <div key={c.id} className="h-[600px] rounded-[10px] bg-white">
                {c.art}
              </div>
            ))}
          </div>
        </main>
      </div>
      <div className="absolute inset-0 z-20 bg-black/20" />
      <div className="absolute inset-0 z-30">
        <FigureModal />
      </div>
    </div>
  );
}
